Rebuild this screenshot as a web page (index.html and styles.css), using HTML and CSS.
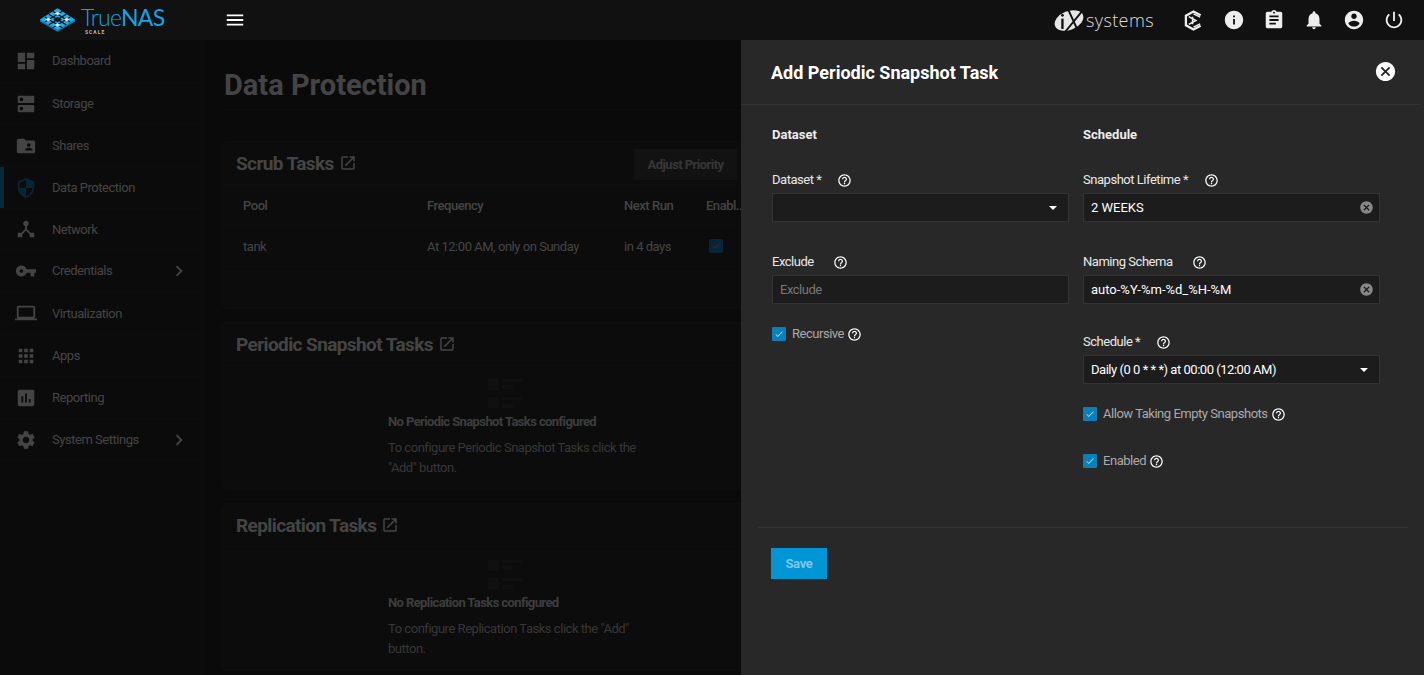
FILE: index.html
```html
<!DOCTYPE html>
<html>
    <head>
        <title>TrueNAS - Data Protection</title>
        <link rel="stylesheet" href="styles.css">
    </head>
    <body>
        <svg class="defs" width="0" height="0">
            <symbol id="i-dashboard" viewBox="0 0 24 24"><path d="M3 13h8V3H3v10zm0 8h8v-6H3v6zm10 0h8V11h-8v10zm0-18v6h8V3h-8z"/></symbol>
            <symbol id="i-dns" viewBox="0 0 24 24"><path d="M20 13H4c-.55 0-1 .45-1 1v6c0 .55.45 1 1 1h16c.55 0 1-.45 1-1v-6c0-.55-.45-1-1-1zM7 19c-1.1 0-2-.9-2-2s.9-2 2-2 2 .9 2 2-.9 2-2 2zM20 3H4c-.55 0-1 .45-1 1v6c0 .55.45 1 1 1h16c.55 0 1-.45 1-1V4c0-.55-.45-1-1-1zM7 9c-1.1 0-2-.9-2-2s.9-2 2-2 2 .9 2 2-.9 2-2 2z"/></symbol>
            <symbol id="i-share" viewBox="0 0 24 24"><path d="M20 6h-8l-2-2H4c-1.1 0-1.99.9-1.99 2L2 18c0 1.1.9 2 2 2h16c1.1 0 2-.9 2-2V8c0-1.1-.9-2-2-2zm-5 3c1.1 0 2 .9 2 2s-.9 2-2 2-2-.9-2-2 .9-2 2-2zm4 8h-8v-1c0-1.33 2.67-2 4-2s4 .67 4 2v1z"/></symbol>
            <symbol id="i-security" viewBox="0 0 24 24"><path d="M12 1L3 5v6c0 5.55 3.84 10.74 9 12 5.16-1.26 9-6.45 9-12V5l-9-4zm0 10.99h7c-.53 4.12-3.28 7.79-7 8.94V12H5V6.3l7-3.11v8.8z"/></symbol>
            <symbol id="i-hub" viewBox="0 0 24 24"><path d="M17 16l-4-4V8.82C14.16 8.4 15 7.3 15 6c0-1.66-1.34-3-3-3S9 4.34 9 6c0 1.3.84 2.4 2 2.82V12l-4 4H3v5h5v-3.05l4-4.2 4 4.2V21h5v-5h-4z"/></symbol>
            <symbol id="i-key" viewBox="0 0 24 24"><path d="M12.65 10C11.83 7.67 9.61 6 7 6c-3.31 0-6 2.69-6 6s2.69 6 6 6c2.61 0 4.83-1.67 5.65-4H17v4h4v-4h2v-4H12.65zM7 14c-1.1 0-2-.9-2-2s.9-2 2-2 2 .9 2 2-.9 2-2 2z"/></symbol>
            <symbol id="i-laptop" viewBox="0 0 24 24"><path d="M20 18c1.1 0 1.99-.9 1.99-2L22 6c0-1.1-.9-2-2-2H4c-1.1 0-2 .9-2 2v10c0 1.1.9 2 2 2H0v2h24v-2h-4zM4 6h16v10H4V6z"/></symbol>
            <symbol id="i-apps" viewBox="0 0 24 24"><path d="M4 8h4V4H4v4zm6 12h4v-4h-4v4zm-6 0h4v-4H4v4zm0-6h4v-4H4v4zm6 0h4v-4h-4v4zm6-10v4h4V4h-4zm-6 4h4V4h-4v4zm6 6h4v-4h-4v4zm0 6h4v-4h-4v4z"/></symbol>
            <symbol id="i-report" viewBox="0 0 24 24"><path d="M19 3H5c-1.1 0-2 .9-2 2v14c0 1.1.9 2 2 2h14c1.1 0 2-.9 2-2V5c0-1.1-.9-2-2-2zM9 17H7v-7h2v7zm4 0h-2V7h2v10zm4 0h-2v-4h2v4z"/></symbol>
            <symbol id="i-settings" viewBox="0 0 24 24"><path d="M19.14 12.94c.04-.3.06-.61.06-.94 0-.32-.02-.64-.07-.94l2.03-1.58c.18-.14.23-.41.12-.61l-1.92-3.32c-.12-.22-.37-.29-.59-.22l-2.39.96c-.5-.38-1.03-.7-1.62-.94l-.36-2.54c-.04-.24-.24-.41-.48-.41h-3.84c-.24 0-.43.17-.47.41l-.36 2.54c-.59.24-1.13.57-1.62.94l-2.39-.96c-.22-.08-.47 0-.59.22L2.74 8.87c-.12.21-.08.47.12.61l2.03 1.58c-.05.3-.09.63-.09.94s.02.64.07.94l-2.03 1.58c-.18.14-.23.41-.12.61l1.92 3.32c.12.22.37.29.59.22l2.39-.96c.5.38 1.03.7 1.62.94l.36 2.54c.05.24.24.41.48.41h3.84c.24 0 .44-.17.47-.41l.36-2.54c.59-.24 1.13-.56 1.62-.94l2.39.96c.22.08.47 0 .59-.22l1.92-3.32c.12-.22.07-.47-.12-.61l-2.01-1.58zM12 15.6c-1.98 0-3.6-1.62-3.6-3.6s1.62-3.6 3.6-3.6 3.6 1.62 3.6 3.6-1.62 3.6-3.6 3.6z"/></symbol>
            <symbol id="i-chevron" viewBox="0 0 24 24"><path d="M10 6L8.59 7.41 13.17 12l-4.58 4.59L10 18l6-6z"/></symbol>
            <symbol id="i-menu" viewBox="0 0 24 24"><path d="M3 18h18v-2H3v2zm0-5h18v-2H3v2zm0-7v2h18V6H3z"/></symbol>
            <symbol id="i-info" viewBox="0 0 24 24"><path d="M12 2C6.48 2 2 6.48 2 12s4.48 10 10 10 10-4.48 10-10S17.52 2 12 2zm1 15h-2v-6h2v6zm0-8h-2V7h2v2z"/></symbol>
            <symbol id="i-clipboard" viewBox="0 0 24 24"><path d="M19 3h-4.18C14.4 1.84 13.3 1 12 1c-1.3 0-2.4.84-2.82 2H5c-1.1 0-2 .9-2 2v14c0 1.1.9 2 2 2h14c1.1 0 2-.9 2-2V5c0-1.1-.9-2-2-2zm-7 0c.55 0 1 .45 1 1s-.45 1-1 1-1-.45-1-1 .45-1 1-1zm2 14H7v-2h7v2zm3-4H7v-2h10v2zm0-4H7V7h10v2z"/></symbol>
            <symbol id="i-bell" viewBox="0 0 24 24"><path d="M12 22c1.1 0 2-.9 2-2h-4c0 1.1.89 2 2 2zm6-6v-5c0-3.07-1.64-5.64-4.5-6.32V4c0-.83-.67-1.5-1.5-1.5s-1.5.67-1.5 1.5v.68C7.63 5.36 6 7.92 6 11v5l-2 2v1h16v-1l-2-2z"/></symbol>
            <symbol id="i-account" viewBox="0 0 24 24"><path d="M12 2C6.48 2 2 6.48 2 12s4.48 10 10 10 10-4.48 10-10S17.52 2 12 2zm0 3c1.66 0 3 1.34 3 3s-1.34 3-3 3-3-1.34-3-3 1.34-3 3-3zm0 14.2c-2.5 0-4.71-1.28-6-3.22.03-1.99 4-3.08 6-3.08 1.99 0 5.97 1.09 6 3.08-1.29 1.94-3.5 3.22-6 3.22z"/></symbol>
            <symbol id="i-power" viewBox="0 0 24 24"><path d="M13 3h-2v10h2V3zm4.83 2.17l-1.42 1.42C17.99 7.86 19 9.81 19 12c0 3.87-3.13 7-7 7s-7-3.13-7-7c0-2.19 1.01-4.14 2.58-5.42L6.17 5.17C4.23 6.82 3 9.26 3 12c0 4.97 4.03 9 9 9s9-4.03 9-9c0-2.74-1.23-5.18-3.17-6.83z"/></symbol>
            <symbol id="i-open" viewBox="0 0 24 24"><path d="M19 19H5V5h7V3H5a2 2 0 0 0-2 2v14c0 1.1.9 2 2 2h14c1.1 0 2-.9 2-2v-7h-2v7zM14 3v2h3.59l-9.83 9.83 1.41 1.41L19 6.41V10h2V3h-7z"/></symbol>
            <symbol id="i-help" viewBox="0 0 24 24"><path d="M11 18h2v-2h-2v2zm1-16C6.48 2 2 6.48 2 12s4.48 10 10 10 10-4.48 10-10S17.52 2 12 2zm0 18c-4.41 0-8-3.59-8-8s3.59-8 8-8 8 3.59 8 8-3.59 8-8 8zm0-14c-2.21 0-4 1.79-4 4h2c0-1.1.9-2 2-2s2 .9 2 2c0 2-3 1.75-3 5h2c0-2.25 3-2.5 3-5 0-2.21-1.79-4-4-4z"/></symbol>
            <symbol id="i-cancel" viewBox="0 0 24 24"><path d="M12 2C6.47 2 2 6.47 2 12s4.47 10 10 10 10-4.47 10-10S17.53 2 12 2zm5 13.59L15.59 17 12 13.41 8.41 17 7 15.59 10.59 12 7 8.41 8.41 7 12 10.59 15.59 7 17 8.41 13.41 12 17 15.59z"/></symbol>
            <symbol id="i-check" viewBox="0 0 24 24"><path d="M9 16.2L4.8 12l-1.4 1.4L9 19 21 7l-1.4-1.4z"/></symbol>
            <symbol id="i-empty" viewBox="0 0 35 29"><path d="M0 0h11v11H0zM14 0h21v3H14zM14 6h11v4H14zM0 18h11v11H0zM14 18h21v3H14zM14 25h11v4H14z"/></symbol>
        </svg>

        <header class="topbar">
            <div class="brand">
                <svg class="brand-mark" viewBox="0 0 36 24">
                    <path fill="#0a7fb5" d="M0 11.500v2L18 24l18-10.500v-2z"/>
                    <path fill="#19b0f0" d="M18 0l18 11.500L18 22 0 11.500z"/>
                    <path fill="none" stroke="#111" stroke-width="1.300" d="M9 6l18 11M27 6L9 17M13 3l18 11M23 3L5 14M5 9l18 11M31 9L13 20"/>
                    <path fill="#e4e4e4" d="M18 3.400l3 1.800-3 1.800-3-1.800zM8.400 9.600l3 1.800-3 1.800-3-1.800zM27.600 9.600l3 1.800-3 1.800-3-1.800zM18 15.400l3 1.800-3 1.800-3-1.800z"/>
                    <path fill="#111" d="M18 8.600l4.500 2.900-4.500 2.900-4.500-2.900z"/>
                </svg>
                <div class="brand-name">
                    <span class="brand-true">True</span><span class="brand-nas">NAS</span>
                    <span class="brand-scale">SCALE</span>
                </div>
            </div>
            <button class="menu-btn"><svg class="icon-22"><use href="#i-menu"/></svg></button>
            <div class="top-actions">
                <div class="ix-logo">
                    <svg class="ix-mark" viewBox="0 0 32 24">
                        <ellipse cx="16" cy="12" rx="16" ry="10" fill="#e6e6e6" transform="rotate(-22 16 12)"/>
                        <path fill="none" stroke="#111" stroke-width="2" d="M15 0l11 24M30 2L12 24"/>
                        <path fill="none" stroke="#111" stroke-width="2.500" d="M9 10v11"/>
                        <circle cx="9" cy="6.500" r="1.500" fill="#111"/>
                    </svg>
                    <span class="ix-text">systems</span>
                </div>
                <svg class="tc-mark" viewBox="0 0 20 22">
                    <path fill="none" stroke="#eee" stroke-width="2.400" d="M17.500 5.500L10 1.500 2 6v10l8 4.500 7.500-4"/>
                    <path fill="none" stroke="#eee" stroke-width="1.600" d="M5 7l7.500 4-7.500 4M10 4l7 3.500M10 18l7-3.500M9 7v8"/>
                </svg>
                <svg class="icon-22"><use href="#i-info"/></svg>
                <svg class="icon-22"><use href="#i-clipboard"/></svg>
                <svg class="icon-22"><use href="#i-bell"/></svg>
                <svg class="icon-22"><use href="#i-account"/></svg>
                <svg class="icon-22"><use href="#i-power"/></svg>
            </div>
        </header>

        <div class="shell">
            <nav class="sidebar">
                <a class="nav-item"><svg><use href="#i-dashboard"/></svg><span>Dashboard</span></a>
                <a class="nav-item"><svg><use href="#i-dns"/></svg><span>Storage</span></a>
                <a class="nav-item"><svg><use href="#i-share"/></svg><span>Shares</span></a>
                <a class="nav-item active"><svg><use href="#i-security"/></svg><span>Data Protection</span></a>
                <a class="nav-item"><svg><use href="#i-hub"/></svg><span>Network</span></a>
                <a class="nav-item"><svg><use href="#i-key"/></svg><span>Credentials</span><svg class="chev"><use href="#i-chevron"/></svg></a>
                <a class="nav-item"><svg><use href="#i-laptop"/></svg><span>Virtualization</span></a>
                <a class="nav-item"><svg><use href="#i-apps"/></svg><span>Apps</span></a>
                <a class="nav-item"><svg><use href="#i-report"/></svg><span>Reporting</span></a>
                <a class="nav-item"><svg><use href="#i-settings"/></svg><span>System Settings</span><svg class="chev"><use href="#i-chevron"/></svg></a>
            </nav>

            <main class="content">
                <h1 class="page-title">Data Protection</h1>

                <section class="card card-scrub">
                    <div class="card-head">
                        <h2>Scrub Tasks</h2>
                        <svg class="open-icon"><use href="#i-open"/></svg>
                        <button class="ghost-btn">Adjust Priority</button>
                    </div>
                    <div class="table-row table-head">
                        <span>Pool</span><span>Frequency</span><span>Next Run</span><span>Enabl...</span>
                    </div>
                    <div class="table-row">
                        <span>tank</span><span>At 12:00 AM, only on Sunday</span><span>in 4 days</span>
                        <span class="check small"><svg><use href="#i-check"/></svg></span>
                    </div>
                </section>

                <section class="card card-empty">
                    <div class="card-head">
                        <h2>Periodic Snapshot Tasks</h2>
                        <svg class="open-icon"><use href="#i-open"/></svg>
                    </div>
                    <div class="empty">
                        <svg class="empty-icon"><use href="#i-empty"/></svg>
                        <h3>No Periodic Snapshot Tasks configured</h3>
                        <p>To configure Periodic Snapshot Tasks click the "Add" button.</p>
                    </div>
                </section>

                <section class="card card-empty">
                    <div class="card-head">
                        <h2>Replication Tasks</h2>
                        <svg class="open-icon"><use href="#i-open"/></svg>
                    </div>
                    <div class="empty">
                        <svg class="empty-icon"><use href="#i-empty"/></svg>
                        <h3>No Replication Tasks configured</h3>
                        <p>To configure Replication Tasks click the "Add" button.</p>
                    </div>
                </section>
            </main>
        </div>

        <div class="backdrop"></div>

        <aside class="drawer">
            <div class="drawer-head">
                <h2>Add Periodic Snapshot Task</h2>
                <svg class="close-icon"><use href="#i-cancel"/></svg>
            </div>
            <form class="form">
                <div class="form-col">
                    <h3 class="col-title">Dataset</h3>
                    <div class="field">
                        <label>Dataset * <svg class="help wide"><use href="#i-help"/></svg></label>
                        <div class="input"><span class="value"></span><i class="caret"></i></div>
                    </div>
                    <div class="field">
                        <label>Exclude <svg class="help wider"><use href="#i-help"/></svg></label>
                        <div class="input"><span class="placeholder">Exclude</span></div>
                    </div>
                    <div class="checkline">
                        <span class="check"><svg><use href="#i-check"/></svg></span>
                        <span>Recursive</span><svg class="help"><use href="#i-help"/></svg>
                    </div>
                </div>
                <div class="form-col">
                    <h3 class="col-title">Schedule</h3>
                    <div class="field">
                        <label>Snapshot Lifetime * <svg class="help wide"><use href="#i-help"/></svg></label>
                        <div class="input"><span class="value">2 WEEKS</span><svg class="clear"><use href="#i-cancel"/></svg></div>
                    </div>
                    <div class="field">
                        <label>Naming Schema <svg class="help wider"><use href="#i-help"/></svg></label>
                        <div class="input"><span class="value">auto-%Y-%m-%d_%H-%M</span><svg class="clear"><use href="#i-cancel"/></svg></div>
                    </div>
                    <div class="field">
                        <label>Schedule * <svg class="help wide"><use href="#i-help"/></svg></label>
                        <div class="input"><span class="option">Daily (0 0 * * *) at 00:00 (12:00 AM)</span><i class="caret"></i></div>
                    </div>
                    <div class="checkline">
                        <span class="check"><svg><use href="#i-check"/></svg></span>
                        <span>Allow Taking Empty Snapshots</span><svg class="help"><use href="#i-help"/></svg>
                    </div>
                    <div class="checkline">
                        <span class="check"><svg><use href="#i-check"/></svg></span>
                        <span>Enabled</span><svg class="help"><use href="#i-help"/></svg>
                    </div>
                </div>
            </form>
            <div class="drawer-foot">
                <button class="save-btn" type="button">Save</button>
            </div>
        </aside>
    </body>
</html>
```

FILE: styles.css
```css
* {
    box-sizing: border-box;
}
html, body {
    height: 100%;
}
body {
    margin: 0;
    height: 675px;
    overflow: hidden;
    position: relative;
    font-family: Roboto, "Liberation Sans", sans-serif;
    font-size: 13px;
    letter-spacing: -0.47px;
    background-color: #1a1a1a;
    color: #aaa;
}
h1, h2, h3, p {
    margin: 0;
}
.defs {
    position: absolute;
}
svg {
    fill: currentColor;
}

/* top bar */
.topbar {
    height: 40px;
    display: flex;
    align-items: center;
    background-color: #111;
    color: #eee;
    letter-spacing: 0;
}
.brand {
    width: 224px;
    display: flex;
    align-items: center;
    padding-left: 40px;
    gap: 6px;
}
.brand-mark {
    width: 35px;
    height: 24px;
}
.brand-name {
    position: relative;
    font-family: Lato, sans-serif;
    font-size: 23px;
    letter-spacing: -0.8px;
    line-height: 20px;
    color: #0fa5e6;
    margin-top: -6px;
}
.brand-true {
    font-weight: 300;
}
.brand-nas {
    font-weight: 400;
}
.brand-scale {
    position: absolute;
    left: 4px;
    top: 22px;
    font-family: Roboto, sans-serif;
    font-size: 5px;
    line-height: 6px;
    font-weight: 700;
    letter-spacing: 1px;
    color: #bbb;
}
.menu-btn {
    padding: 0;
    border: none;
    background: none;
    color: #fff;
    display: flex;
}
.top-actions {
    margin-left: auto;
    display: flex;
    align-items: center;
    gap: 18px;
    padding-right: 19px;
}
.icon-22 {
    width: 22px;
    height: 22px;
    display: block;
}
.ix-logo {
    display: flex;
    align-items: center;
    gap: 2px;
    margin-right: 12px;
}
.ix-mark {
    width: 30px;
    height: 23px;
}
.ix-text {
    font-family: "Open Sans", sans-serif;
    font-weight: 300;
    font-size: 18px;
    letter-spacing: 0.4px;
    line-height: 20px;
    color: #ddd;
}
.tc-mark {
    width: 19px;
    height: 21px;
    margin-right: 2px;
}

/* page behind the drawer */
.shell {
    display: flex;
    height: 635px;
}
.sidebar {
    width: 205px;
    flex-shrink: 0;
    background-color: #1c1c1c;
    border-right: 1px solid #222;
}
.nav-item {
    height: 42px;
    display: flex;
    align-items: center;
    padding-left: 15px;
    gap: 15px;
    color: #aaa;
    border-bottom: 1px solid #222;
    position: relative;
}
.nav-item:first-child {
    height: 43px;
    padding-bottom: 1px;
}
.nav-item:nth-child(5) {
    height: 41px;
}
.nav-item:nth-child(7) {
    height: 43px;
}
.nav-item svg {
    width: 22px;
    height: 22px;
    flex-shrink: 0;
}
.nav-item.active {
    box-shadow: inset 4px 0 0 #0f6a94;
}
.nav-item.active svg {
    color: #0f5f85;
}
.chev {
    margin-left: auto;
    margin-right: 14px;
}
.content {
    flex: 1;
    padding: 0 17px;
    background-color: #1a1a1a;
    overflow: hidden;
}
.page-title {
    font-size: 29px;
    font-weight: 700;
    line-height: 34px;
    letter-spacing: 0;
    color: #aaa;
    margin: 28px 0 0 2px;
    padding-bottom: 7px;
    border-bottom: 1px solid #222;
    height: 42px;
}
.card {
    width: 540px;
    background-color: #1e1e1e;
    border: 1px solid #242424;
    border-radius: 6px;
}
.card-scrub {
    height: 168px;
    margin-top: 31px;
}
.card-empty {
    height: 168px;
    margin-top: 13px;
}
.card-head {
    height: 43px;
    display: flex;
    align-items: center;
    padding-left: 13px;
    gap: 5px;
    border-bottom: 1px solid #242424;
    position: relative;
}
.card-head h2 {
    font-size: 19px;
    font-weight: 700;
    letter-spacing: -0.6px;
    color: #aaa;
}
.open-icon {
    width: 18px;
    height: 18px;
}
.ghost-btn {
    position: absolute;
    left: 411px;
    top: 7px;
    width: 103px;
    height: 31px;
    border: none;
    background-color: #2f2f2f;
    color: #888;
    font: 700 13px Roboto, sans-serif;
    letter-spacing: -0.53px;
}
.table-row {
    height: 41px;
    display: grid;
    grid-template-columns: 184px 197px 82px 60px;
    align-items: center;
    padding-left: 20px;
    border-bottom: 1px solid #242424;
}
.table-head {
    font-weight: 500;
}
.check {
    width: 14px;
    height: 14px;
    background-color: #0a80b8;
    border-radius: 1px;
    display: flex;
    align-items: center;
    justify-content: center;
    color: #a8d4ea;
    flex-shrink: 0;
}
.check svg {
    width: 10px;
    height: 10px;
}
.check.small {
    margin-left: 3px;
    background-color: #0f5f85;
    color: #777;
}
.empty {
    margin-left: 165px;
    width: 262px;
    padding-top: 13px;
}
.empty-icon {
    display: block;
    width: 35px;
    height: 29px;
    margin-left: 100px;
    color: #2a2a2a;
}
.empty h3 {
    font-size: 13px;
    font-weight: 700;
    letter-spacing: -0.6px;
    line-height: 16px;
    margin-top: 6px;
    color: #999;
}
.empty p {
    line-height: 19.500px;
    margin-top: 8px;
    color: #888;
}

/* dim layer over the page */
.backdrop {
    position: absolute;
    left: 0;
    top: 40px;
    right: 0;
    bottom: 0;
    background-color: rgba(0, 0, 0, 0.6);
}

/* slide-in form */
.drawer {
    position: absolute;
    left: 741px;
    top: 40px;
    right: 0;
    bottom: 0;
    background-color: #282828;
    color: #eee;
}
.drawer-head {
    height: 65px;
    display: flex;
    align-items: center;
    justify-content: space-between;
    padding: 0 24px 0 30px;
    margin-right: 3px;
    border-bottom: 1px solid #333;
}
.drawer-head h2 {
    font-size: 18px;
    font-weight: 700;
    letter-spacing: 0;
    color: #fff;
}
.close-icon {
    width: 23px;
    height: 23px;
    color: #fff;
    margin-top: -2px;
}
.form {
    display: grid;
    grid-template-columns: 297px 297px;
    column-gap: 14px;
    padding-left: 31px;
    height: 422px;
}
.col-title {
    font-size: 13px;
    font-weight: 700;
    letter-spacing: 0;
    color: #eee;
    line-height: 16px;
    margin-top: 22px;
}
.field {
    margin-top: 29px;
}
.field + .field {
    margin-top: 32px;
}
.field + .field + .field {
    margin-top: 30px;
}
.field label {
    display: flex;
    align-items: center;
    line-height: 16px;
    color: #e8e8e8;
    margin-bottom: 5px;
}
.help {
    width: 15px;
    height: 15px;
    color: #fff;
    flex-shrink: 0;
}
.help.wide {
    margin-left: 16px;
}
.help.wider {
    margin-left: 19px;
}
.input {
    height: 29px;
    display: flex;
    align-items: center;
    justify-content: space-between;
    padding: 0 7px;
    background-color: #1c1c1c;
    border: 1px solid #333;
    color: #fff;
}
.value {
    letter-spacing: 0;
}
.placeholder {
    color: #777;
}
.caret {
    width: 0;
    height: 0;
    border-left: 4px solid transparent;
    border-right: 4px solid transparent;
    border-top: 4px solid #fff;
    margin-left: auto;
    margin-right: 4px;
}
.clear {
    width: 15px;
    height: 15px;
    color: #888;
    margin-right: -2px;
}
.checkline {
    display: flex;
    align-items: center;
    gap: 6px;
    line-height: 16px;
    color: #aaa;
    margin-top: 22px;
}
.checkline .help {
    margin-left: -3px;
}
.checkline + .checkline {
    margin-top: 31px;
}
.drawer-foot {
    margin: 0 16px 0 17px;
    border-top: 1px solid #333;
    padding: 20px 13px;
}
.save-btn {
    display: block;
    width: 56px;
    height: 31px;
    border: none;
    background-color: #0095d5;
    color: #7fc8ea;
    font: 700 13px Roboto, sans-serif;
    letter-spacing: -0.3px;
}
```
